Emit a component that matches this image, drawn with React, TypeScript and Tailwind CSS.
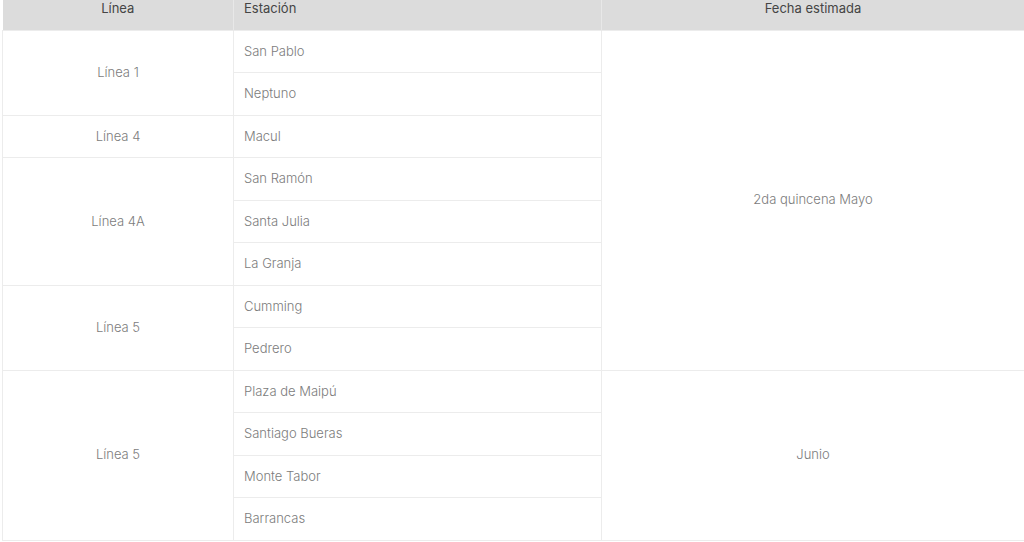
const groups = [
  { line: 'Línea 1', stations: ['San Pablo', 'Neptuno'] },
  { line: 'Línea 4', stations: ['Macul'] },
  { line: 'Línea 4A', stations: ['San Ramón', 'Santa Julia', 'La Granja'] },
  { line: 'Línea 5', stations: ['Cumming', 'Pedrero'] },
  { line: 'Línea 5', stations: ['Plaza de Maipú', 'Santiago Bueras', 'Monte Tabor', 'Barrancas'] },
];

const dates = [
  { label: '2da quincena Mayo', span: 8 },
  { label: 'Junio', span: 4 },
];

export default function App() {
  const rows: { line?: { text: string; span: number }; station: string; date?: { text: string; span: number } }[] = [];
  let d = 0;
  let dLeft = 0;
  groups.forEach((g) => {
    g.stations.forEach((s, j) => {
      const row: (typeof rows)[number] = { station: s };
      if (j === 0) row.line = { text: g.line, span: g.stations.length };
      if (dLeft === 0) {
        row.date = { text: dates[d].label, span: dates[d].span };
        dLeft = dates[d].span;
        d++;
      }
      dLeft--;
      rows.push(row);
    });
  });

  return (
    <div className="w-[1024px] h-[542px] bg-white overflow-hidden pl-[2px]" style={{ fontFamily: 'Inter, Lato, sans-serif' }}>
      <table className="w-[1022px] border-collapse table-fixed text-[13px]">
        <colgroup>
          <col className="w-[231px]" />
          <col className="w-[368px]" />
          <col />
        </colgroup>
        <thead>
          <tr className="h-[30px] bg-[#dcdcdc] text-[#454545]">
            <th className="font-normal text-center align-top pt-0 leading-[16px] border-r border-[#e8e8e8]">Línea</th>
            <th className="font-normal text-left align-top pl-[10px] leading-[16px] border-r border-[#e8e8e8]">Estación</th>
            <th className="font-normal text-center align-top leading-[16px]">Fecha estimada</th>
          </tr>
        </thead>
        <tbody className="text-[#7c7c7c] font-light">
          {rows.map((r, k) => (
            <tr key={k} className="h-[42.5px]">
              {r.line && (
                <td rowSpan={r.line.span} className="text-center border border-[#ececec]">
                  {r.line.text}
                </td>
              )}
              <td className="pl-[10px] border border-[#ececec]">{r.station}</td>
              {r.date && (
                <td rowSpan={r.date.span} className="text-center border border-[#ececec] border-r-0">
                  {r.date.text}
                </td>
              )}
            </tr>
          ))}
        </tbody>
      </table>
    </div>
  );
}
